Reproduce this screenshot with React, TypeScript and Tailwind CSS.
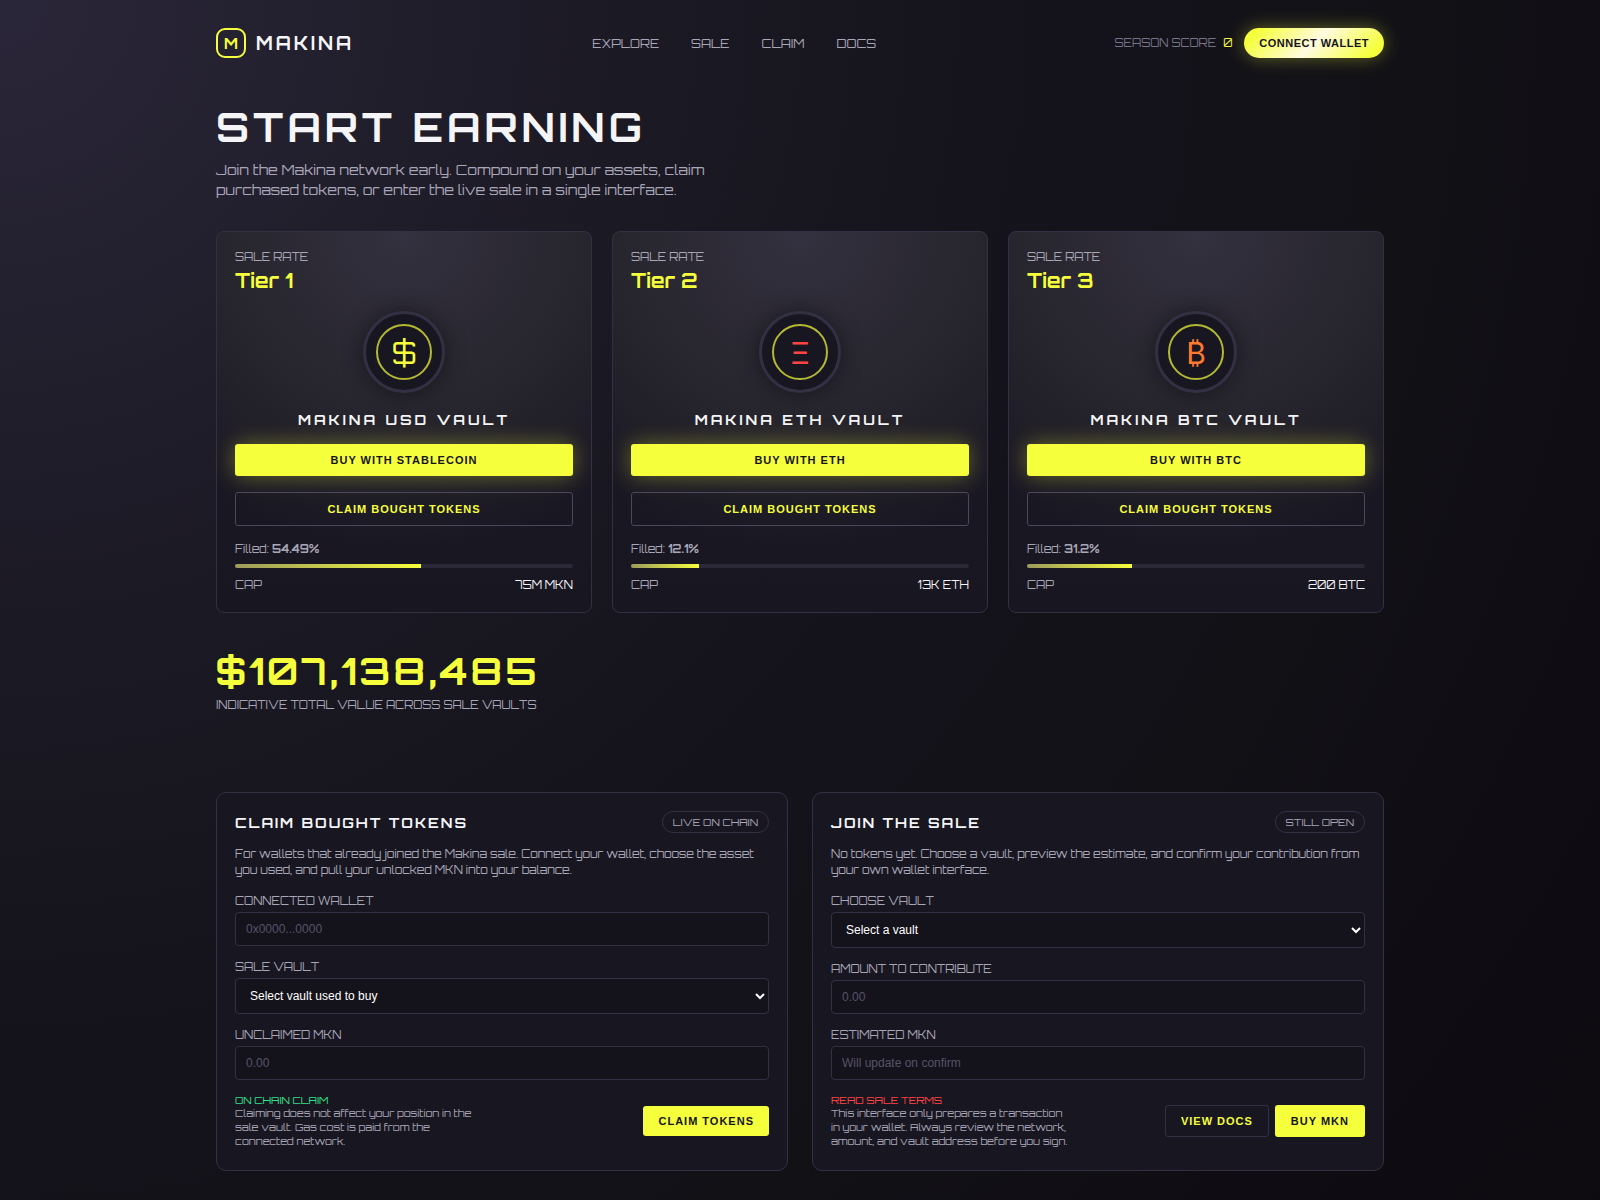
import React, { useState } from "react";
import clsx from "clsx";

interface Vault {
  id: string;
  tier: string;
  name: string;
  symbol: string;
  symbolClass: string;
  buyLabel: string;
  filled: string;
  progress: number;
  cap: string;
}

const vaults: Vault[] = [
  {
    id: "usd",
    tier: "Tier 1",
    name: "Makina USD Vault",
    symbol: "$",
    symbolClass: "text-[#f6ff3b]",
    buyLabel: "Buy with stablecoin",
    filled: "54.49%",
    progress: 55,
    cap: "75M MKN",
  },
  {
    id: "eth",
    tier: "Tier 2",
    name: "Makina ETH Vault",
    symbol: "Ξ",
    symbolClass: "text-[#ff4444]",
    buyLabel: "Buy with ETH",
    filled: "12.1%",
    progress: 20,
    cap: "13K ETH",
  },
  {
    id: "btc",
    tier: "Tier 3",
    name: "Makina BTC Vault",
    symbol: "₿",
    symbolClass: "text-[#ff7a2f]",
    buyLabel: "Buy with BTC",
    filled: "31.2%",
    progress: 31,
    cap: "200 BTC",
  },
];

const navLinks = ["Explore", "Sale", "Claim", "Docs"];

const controlFont = "font-['Liberation_Sans',Arial,sans-serif]";
const buttonText = "text-[11px] leading-[14px] font-bold uppercase tracking-[1px]";
const fieldClass =
  "w-full rounded border border-[#343044] bg-[#14121a] text-[12px] text-white outline-none focus:border-[#f6ff3b]";

const Header: React.FC = () => (
  <header className="flex items-center justify-between pt-7">
    <a href="#" className="flex items-center gap-2.5">
      <span className="flex h-[30px] w-[30px] items-center justify-center rounded-[9px] border-2 border-[#f6ff3b] pt-0.5 text-[15px] leading-6 font-bold text-[#f6ff3b]">
        M
      </span>
      <span className="text-[18px] leading-6 font-bold tracking-[3px] text-[#f5f5f7] uppercase">
        Makina
      </span>
    </a>
    <nav className="flex gap-8 pt-0.5 text-[12px] leading-5 text-[#a9a6b8] uppercase">
      {navLinks.map((link) => (
        <a key={link} href={`#${link.toLowerCase()}`} className="hover:text-white">
          {link}
        </a>
      ))}
    </nav>
    <div className="flex items-center gap-3">
      <p className="text-[11px] leading-5 text-[#77738a] uppercase">
        Season score <span className="ml-1 text-[#f6ff3b]">0</span>
      </p>
      <button
        type="button"
        className="h-[30px] rounded-full bg-[linear-gradient(135deg,#f6ff3b_10%,#fffbe0_50%,#f6ff3b_90%)] px-[15px] font-['Liberation_Sans',Arial,sans-serif] text-[11px] font-bold tracking-[0.5px] text-[#16141d] uppercase shadow-[0_0_18px_rgba(246,255,59,0.35)]"
      >
        Connect wallet
      </button>
    </div>
  </header>
);

const VaultCard: React.FC<{ vault: Vault }> = ({ vault }) => (
  <article className="flex flex-col rounded-lg border border-[#343044] bg-[radial-gradient(circle_at_top,#343140_0%,#26242c_45%,transparent_75%),linear-gradient(#1d1a27,#181621)] px-[18px] pt-4 pb-[18px]">
    <p className="text-[11px] leading-[18px] text-[#a9a6b8] uppercase">Sale rate</p>
    <p className="text-[20px] leading-[30px] font-bold text-[#f6ff3b]">{vault.tier}</p>
    <div className="mt-[15px] flex h-[82px] w-[82px] items-center justify-center self-center rounded-full border-[3px] border-[#343044] bg-[#181621] shadow-[0_0_22px_rgba(0,0,0,0.45)]">
      <div
        className={clsx(
          "flex h-14 w-14 items-center justify-center rounded-full border-2 border-[#b4b933] pt-0.5 text-[30px] leading-9",
          vault.symbolClass
        )}
      >
        {vault.symbol}
      </div>
    </div>
    <h2 className="mt-[17px] text-center text-[14px] leading-5 font-bold tracking-[3px] text-[#f5f5f7] uppercase">
      {vault.name}
    </h2>
    <button
      type="button"
      className={clsx(
        "mt-[14px] h-8 w-full rounded-[3px] bg-[#f6ff3b] text-[#16141d] shadow-[0_0_22px_rgba(246,255,59,0.35)]",
        controlFont,
        buttonText
      )}
    >
      {vault.buyLabel}
    </button>
    <button
      type="button"
      className={clsx(
        "mt-4 h-[34px] w-full rounded-[3px] border border-[#4b475c] text-[#f6ff3b]",
        controlFont,
        buttonText
      )}
    >
      Claim bought tokens
    </button>
    <p className="mt-[14px] text-[11px] leading-[18px] text-[#a9a6b8]">
      Filled: <strong className="font-bold">{vault.filled}</strong>
    </p>
    <div className="mt-1.5 h-1 overflow-hidden rounded-full bg-[#2b2838]">
      <div
        className="h-full bg-[linear-gradient(90deg,#9c9a5c,#f6ff3b)]"
        style={{ width: `${vault.progress}%` }}
      />
    </div>
    <div className="mt-2 flex justify-between text-[11px] leading-[18px] text-[#a9a6b8]">
      <span>CAP</span>
      <span className="text-[#f5f5f7]">{vault.cap}</span>
    </div>
  </article>
);

interface PanelProps {
  title: string;
  badge: string;
  description: string;
  children: React.ReactNode;
}

const Panel: React.FC<PanelProps> = ({ title, badge, description, children }) => (
  <section className="flex flex-col rounded-[10px] border border-[#343044] bg-[#181621] px-[18px] pt-[18px] pb-[22px]">
    <div className="flex items-center justify-between">
      <h2 className="pt-0.5 text-[14px] leading-5 font-bold tracking-[2px] text-[#f5f5f7] uppercase">
        {title}
      </h2>
      <span className="rounded-full border border-[#343044] px-2.5 text-[10px] leading-5 text-[#a9a6b8] uppercase">
        {badge}
      </span>
    </div>
    <p className="mt-[13px] mb-0.5 text-[11px] leading-4 text-[#a9a6b8]">{description}</p>
    {children}
  </section>
);

interface FieldProps {
  id: string;
  label: string;
  children: React.ReactNode;
}

const Field: React.FC<FieldProps> = ({ id, label, children }) => (
  <div className="mt-[13px] flex flex-col gap-[3px]">
    <label htmlFor={id} className="text-[11px] leading-4 text-[#a9a6b8] uppercase">
      {label}
    </label>
    {children}
  </div>
);

const App: React.FC = () => {
  const [claimVault, setClaimVault] = useState("");
  const [buyVault, setBuyVault] = useState("");

  return (
    <div className="min-h-screen bg-[#121116] bg-[radial-gradient(circle_at_top_left,#2a2639_0%,#1a1822_35%,#15131c_50%,#121116_70%,#0d0a10_100%)] font-['Orbitron',Inter,sans-serif]">
      <div className="mx-auto max-w-[1200px] px-4 pb-[29px]">
        <Header />

        <main>
          <section className="mt-[42px]">
            <h1 className="text-[40px] leading-[54px] font-bold tracking-[4px] text-[#f5f5f7] uppercase">
              Start earning
            </h1>
            <p className="mt-1.5 max-w-[520px] text-[14px] leading-5 text-[#a9a6b8]">
              Join the Makina network early. Compound on your assets, claim purchased tokens, or
              enter the live sale in a single interface.
            </p>
          </section>

          <section className="mt-[31px] grid grid-cols-3 gap-5">
            {vaults.map((vault) => (
              <VaultCard key={vault.id} vault={vault} />
            ))}
          </section>

          <section className="mt-[33px]">
            <p className="text-[38px] leading-[50px] font-bold tracking-[3px] text-[#f6ff3b]">
              $107,138,485
            </p>
            <p className="text-[11px] leading-[18px] text-[#a9a6b8] uppercase">
              Indicative total value across sale vaults
            </p>
          </section>

          <div className="mt-[78px] grid grid-cols-2 gap-6">
            <Panel
              title="Claim bought tokens"
              badge="Live on chain"
              description="For wallets that already joined the Makina sale. Connect your wallet, choose the asset you used, and pull your unlocked MKN into your balance."
            >
              <Field id="wallet" label="Connected wallet">
                <input
                  id="wallet"
                  type="text"
                  placeholder="0x0000...0000"
                  className={clsx(fieldClass, controlFont, "h-[34px] px-2.5 placeholder:text-[#57536a]")}
                />
              </Field>
              <Field id="claim-vault" label="Sale vault">
                <select
                  id="claim-vault"
                  value={claimVault}
                  onChange={(e) => setClaimVault(e.target.value)}
                  className={clsx(fieldClass, controlFont, "h-9 pl-2.5")}
                >
                  <option value="">Select vault used to buy</option>
                  {vaults.map((vault) => (
                    <option key={vault.id} value={vault.id}>
                      {vault.name}
                    </option>
                  ))}
                </select>
              </Field>
              <Field id="unclaimed" label="Unclaimed MKN">
                <input
                  id="unclaimed"
                  type="text"
                  placeholder="0.00"
                  className={clsx(fieldClass, controlFont, "h-[34px] px-2.5 placeholder:text-[#57536a]")}
                />
              </Field>
              <div className="mt-[14px] flex items-center justify-between">
                <div className="w-60 text-[10px] leading-[14px] text-[#a9a6b8]">
                  <p className="leading-3 text-[#35e08a] uppercase">On chain claim</p>
                  <p>
                    Claiming does not affect your position in the sale vault. Gas cost is paid from
                    the connected network.
                  </p>
                </div>
                <button
                  type="button"
                  className={clsx(
                    "h-[30px] rounded-[3px] bg-[#f6ff3b] px-[15px] text-[#16141d]",
                    controlFont,
                    buttonText
                  )}
                >
                  Claim tokens
                </button>
              </div>
            </Panel>

            <Panel
              title="Join the sale"
              badge="Still open"
              description="No tokens yet. Choose a vault, preview the estimate, and confirm your contribution from your own wallet interface."
            >
              <Field id="buy-vault" label="Choose vault">
                <select
                  id="buy-vault"
                  value={buyVault}
                  onChange={(e) => setBuyVault(e.target.value)}
                  className={clsx(fieldClass, controlFont, "h-9 pl-2.5")}
                >
                  <option value="">Select a vault</option>
                  {vaults.map((vault) => (
                    <option key={vault.id} value={vault.id}>
                      {vault.name}
                    </option>
                  ))}
                </select>
              </Field>
              <Field id="amount" label="Amount to contribute">
                <input
                  id="amount"
                  type="text"
                  placeholder="0.00"
                  className={clsx(fieldClass, controlFont, "h-[34px] px-2.5 placeholder:text-[#57536a]")}
                />
              </Field>
              <Field id="estimated" label="Estimated MKN">
                <input
                  id="estimated"
                  type="text"
                  placeholder="Will update on confirm"
                  className={clsx(fieldClass, controlFont, "h-[34px] px-2.5 placeholder:text-[#57536a]")}
                />
              </Field>
              <div className="mt-[14px] flex items-center justify-between">
                <div className="w-60 text-[10px] leading-[14px] text-[#a9a6b8]">
                  <p className="leading-3 text-[#ff4444] uppercase">Read sale terms</p>
                  <p>
                    This interface only prepares a transaction in your wallet. Always review the
                    network, amount, and vault address before you sign.
                  </p>
                </div>
                <div className="flex gap-1.5">
                  <button
                    type="button"
                    className={clsx(
                      "h-8 rounded-[3px] border border-[#343044] px-[15px] text-[#f6ff3b]",
                      controlFont,
                      buttonText
                    )}
                  >
                    View docs
                  </button>
                  <button
                    type="button"
                    className={clsx(
                      "h-8 rounded-[3px] bg-[#f6ff3b] px-4 text-[#16141d]",
                      controlFont,
                      buttonText
                    )}
                  >
                    Buy MKN
                  </button>
                </div>
              </div>
            </Panel>
          </div>
        </main>
      </div>
    </div>
  );
};

export default App;
